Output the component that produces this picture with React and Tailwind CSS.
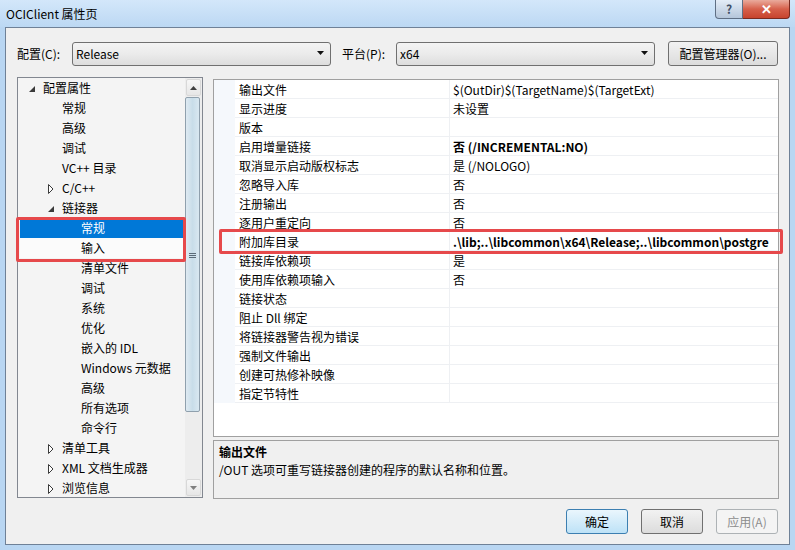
import React from 'react';

const treeItems = [
  { t: '配置属性', lvl: 1, exp: 'open' },
  { t: '常规', lvl: 2 },
  { t: '高级', lvl: 2 },
  { t: '调试', lvl: 2 },
  { t: 'VC++ 目录', lvl: 2 },
  { t: 'C/C++', lvl: 2, exp: 'closed' },
  { t: '链接器', lvl: 2, exp: 'open' },
  { t: '常规', lvl: 3, sel: true },
  { t: '输入', lvl: 3, hover: true },
  { t: '清单文件', lvl: 3 },
  { t: '调试', lvl: 3 },
  { t: '系统', lvl: 3 },
  { t: '优化', lvl: 3 },
  { t: '嵌入的 IDL', lvl: 3 },
  { t: 'Windows 元数据', lvl: 3 },
  { t: '高级', lvl: 3 },
  { t: '所有选项', lvl: 3 },
  { t: '命令行', lvl: 3 },
  { t: '清单工具', lvl: 2, exp: 'closed' },
  { t: 'XML 文档生成器', lvl: 2, exp: 'closed' },
  { t: '浏览信息', lvl: 2, exp: 'closed' },
];

const indent = { 1: 'pl-[9px]', 2: 'pl-[28px]', 3: 'pl-[47px]' };

const props = [
  ['输出文件', '$(OutDir)$(TargetName)$(TargetExt)'],
  ['显示进度', '未设置'],
  ['版本', ''],
  ['启用增量链接', '否 (/INCREMENTAL:NO)', true],
  ['取消显示启动版权标志', '是 (/NOLOGO)'],
  ['忽略导入库', '否'],
  ['注册输出', '否'],
  ['逐用户重定向', '否'],
  ['附加库目录', '.\\lib;..\\libcommon\\x64\\Release;..\\libcommon\\postgre', true],
  ['链接库依赖项', '是'],
  ['使用库依赖项输入', '否'],
  ['链接状态', ''],
  ['阻止 Dll 绑定', ''],
  ['将链接器警告视为错误', ''],
  ['强制文件输出', ''],
  ['创建可热修补映像', ''],
  ['指定节特性', ''],
];

const Expander = ({ exp }) => {
  if (exp === 'open')
    return (
      <svg width="7" height="7" className="mt-[3px]">
        <polygon points="6,0 6,6 0,6" fill="#3a3a3a" />
      </svg>
    );
  if (exp === 'closed')
    return (
      <svg width="7" height="10" className="mt-[1px]">
        <polygon points="0.5,0.5 5,5 0.5,9.5" fill="#fff" stroke="#3a3a3a" />
      </svg>
    );
  return null;
};

const ComboBox = ({ value }) => (
  <div className="flex h-[24px] w-[259px] items-center justify-between rounded-[3px] border border-[#707070] bg-linear-to-b from-[#f4f4f4] via-[#ebebeb] to-[#dddddd] pl-[3px] pr-[5px]">
    <span>{value}</span>
    <svg width="8" height="5">
      <polygon points="0,0 7,0 3.5,4" fill="#111" />
    </svg>
  </div>
);

const Button = ({ children, variant }) => {
  const cls =
    variant === 'default'
      ? 'border-[#3c7fb1] from-[#eaf6fd] to-[#bde2f7] text-black'
      : variant === 'disabled'
      ? 'border-[#adb2b5] from-[#f4f4f4] to-[#f4f4f4] text-[#8d8d8d]'
      : 'border-[#707070] from-[#f2f2f2] to-[#dcdcdc] text-black';
  return (
    <div className={`flex h-[25px] w-[62px] items-center justify-center rounded-[3px] border bg-linear-to-b ${cls}`}>
      {children}
    </div>
  );
};

export default function App() {
  return (
    <div className="relative h-[550px] w-[795px] overflow-hidden bg-[#b9d6f2] font-['Noto_Sans_CJK_SC',sans-serif] text-[12px] leading-[16px] text-black">
      {/* title bar */}
      <div className="flex h-[27px] items-start justify-between bg-linear-to-b from-[#d3e7fa] to-[#bcd8f3]">
        <div className="pl-[6px] pt-[6px]">OCIClient 属性页</div>
        <div className="mr-[5px] flex">
          <div className="flex h-[19px] w-[28px] items-center justify-center rounded-bl-[4px] border border-t-0 border-[#5f6f84] bg-linear-to-b from-[#e4edf7] to-[#b5c6da] font-bold text-[#3f4f66]">?</div>
          <div className="flex h-[19px] w-[47px] items-center justify-center rounded-br-[4px] border border-t-0 border-l-0 border-[#7a2a20] bg-linear-to-b from-[#e9aa9c] via-[#d6604b] to-[#c7432d] text-[13px] font-bold text-white">✕</div>
        </div>
      </div>

      {/* client area */}
      <div className="mx-[5px] flex h-[518px] flex-col border border-[#6f8197] bg-[#f0f0f0]">
        <div className="mt-[13px] flex h-[25px] items-center pl-[11px]">
          <span className="w-[55px]">配置(C):</span>
          <ComboBox value="Release" />
          <span className="ml-[11px] w-[54px]">平台(P):</span>
          <ComboBox value="x64" />
          <div className="ml-[13px] flex h-[25px] w-[110px] items-center justify-center rounded-[3px] border border-[#707070] bg-linear-to-b from-[#f2f2f2] to-[#dcdcdc]">
            配置管理器(O)...
          </div>
        </div>

        <div className="mt-[11px] flex gap-[10px] pl-[11px]">
          {/* tree */}
          <div className="flex h-[421px] w-[186px] border border-[#828790] bg-[#f4f4f4]">
            <div className="flex-1 overflow-hidden">
              {treeItems.map((it, i) => (
                <div
                  key={i}
                  className={`mx-[2px] flex h-[20px] items-center ${indent[it.lvl]} ${
                    it.sel ? 'bg-[#0078d7] text-white' : it.hover ? 'bg-[#fbfbfb]' : ''
                  }`}
                >
                  <span className="flex w-[14px] items-center">
                    <Expander exp={it.exp} />
                  </span>
                  <span className="whitespace-nowrap">{it.t}</span>
                </div>
              ))}
            </div>
            <div className="flex w-[17px] flex-col bg-[#ededed] py-[1px]">
              <div className="mx-[1px] flex h-[17px] items-center justify-center rounded-[2px] border border-[#d8d8d8] bg-linear-to-b from-[#f7f7f7] to-[#e6e6e6]">
                <svg width="7" height="4">
                  <polygon points="3.5,0 7,4 0,4" fill="#404040" />
                </svg>
              </div>
              <div className="mt-[1px] flex h-[315px] w-[15px] items-center justify-center rounded-[2px] border border-[#8fa0ad] bg-linear-to-r from-[#dfeaf2] via-[#c8dde9] to-[#d9e8f1]">
                <div className="mt-[2px] flex flex-col gap-[1px]">
                  <div className="h-px w-[7px] bg-[#5b6b78]" />
                  <div className="h-px w-[7px] bg-[#5b6b78]" />
                  <div className="h-px w-[7px] bg-[#5b6b78]" />
                </div>
              </div>
              <div className="flex-1" />
              <div className="mx-[1px] flex h-[17px] items-center justify-center rounded-[2px] border border-[#d8d8d8] bg-linear-to-b from-[#f7f7f7] to-[#e6e6e6]">
                <svg width="7" height="4">
                  <polygon points="0,0 7,0 3.5,4" fill="#808080" />
                </svg>
              </div>
            </div>
          </div>

          {/* grid + description */}
          <div className="mt-[2px] flex w-[566px] flex-col gap-[3px]">
            <div className="h-[358px] border border-[#a0a0a0] bg-white">
              {props.map(([name, value, bold], i) => (
                <div key={i} className="flex h-[19px]">
                  <div className="w-[21px] bg-[#f5f8fc]" />
                  <div className="flex w-[214px] items-center border-b border-[#eef0f3] pl-[4px] pt-[1px] whitespace-nowrap">{name}</div>
                  <div className={`flex min-w-0 flex-1 items-center overflow-hidden border-b border-l border-[#eef0f3] pl-[3px] pt-[1px] whitespace-nowrap ${bold ? 'font-bold' : ''}`}>
                    {value}
                  </div>
                </div>
              ))}
            </div>
            <div className="h-[59px] border border-[#a0a0a0] bg-[#f0f0f0] pl-[5px] pt-[2px] leading-[18px]">
              <div className="font-bold">输出文件</div>
              <div>/OUT 选项可重写链接器创建的程序的默认名称和位置。</div>
            </div>
          </div>
        </div>

        <div className="mt-[10px] flex justify-end gap-[13px] pr-[11px]">
          <Button variant="default">确定</Button>
          <Button>取消</Button>
          <Button variant="disabled">应用(A)</Button>
        </div>
      </div>

      {/* red annotation boxes */}
      <div className="absolute left-[16px] top-[217px] h-[45px] w-[170px] rounded-[2px] border-[3px] border-[#e6494b]" />
      <div className="absolute left-[219px] top-[229px] h-[25px] w-[564px] rounded-[2px] border-[3px] border-[#e6494b]" />
    </div>
  );
}
